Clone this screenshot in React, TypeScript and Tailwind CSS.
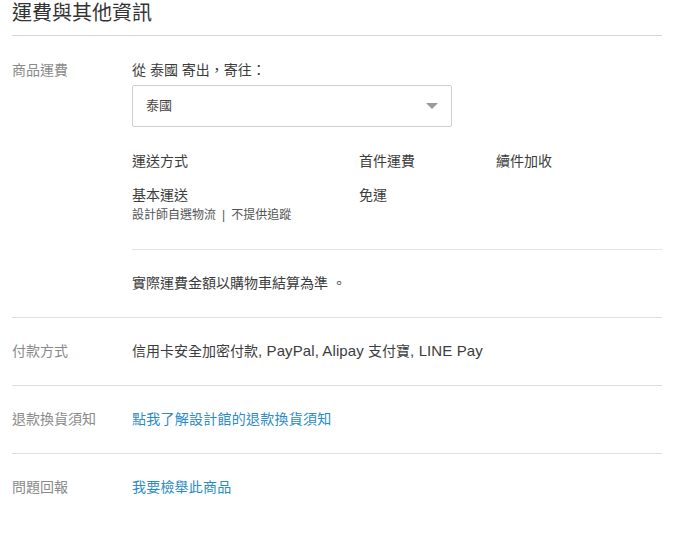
import React from 'react';

const Row = ({ label, children, last = false }: { label: string; children: React.ReactNode; last?: boolean }) => (
  <div className={`flex pt-[24px] pb-[25px] ${last ? '' : 'border-b border-[#dddddd]'}`}>
    <div className="w-[120px] shrink-0 text-[14px] leading-[18px] text-[#8a8a8a]">{label}</div>
    <div className="flex-1 text-[14px] leading-[18px] text-[#3c3c3c]">{children}</div>
  </div>
);

// Latin runs render a touch wider than the CJK text around them
const Lat = ({ children }: { children: React.ReactNode }) => <span className="text-[15px] tracking-[0.1px]">{children}</span>;

const ShippingInfo = () => {
  return (
    <div
      className="min-h-[538px] bg-white px-[12px] pr-[13px]"
      style={{ fontFamily: '"Liberation Sans", "Noto Sans CJK TC", sans-serif' }}
    >
      <h2 className="border-b border-[#d6d6d6] pb-[9px] text-[20px] leading-[26px] text-[#333333]">運費與其他資訊</h2>

      {/* 商品運費 */}
      <div className="flex border-b border-[#dddddd] pt-[25px] pb-[25px]">
        <div className="w-[120px] shrink-0 text-[14px] leading-[18px] text-[#8a8a8a]">商品運費</div>
        <div className="flex-1 text-[14px] leading-[18px] text-[#3c3c3c]">
          <p>從 泰國 寄出，寄往：</p>

          <div className="mt-[6px] flex h-[42px] w-[320px] items-center justify-between rounded-[2px] border border-[#cfcfcf] pl-[13px] pr-[13px]">
            <span className="text-[13px] text-[#444444]">泰國</span>
            <svg width="12" height="6" viewBox="0 0 12 6">
              <polygon points="0,0 12,0 6,6" fill="#9a9a9a" />
            </svg>
          </div>

          <div className="mt-[25px] flex">
            <div className="w-[227px]">運送方式</div>
            <div className="w-[137px]">首件運費</div>
            <div>續件加收</div>
          </div>

          <div className="mt-[16px] flex border-b border-[#e3e3e3] pb-[26px]">
            <div className="w-[227px]">
              <div>基本運送</div>
              <div className="mt-[3px] text-[12px] leading-[16px] text-[#555555]">
                設計師自選物流<span className="mx-[6px]">|</span>不提供追蹤
              </div>
            </div>
            <div className="w-[137px]">免運</div>
            <div></div>
          </div>

          <p className="mt-[24px]">實際運費金額以購物車結算為準 。</p>
        </div>
      </div>

      <Row label="付款方式">
        信用卡安全加密付款<Lat>, PayPal, Alipay </Lat>支付寶<Lat>, LINE Pay</Lat>
      </Row>

      <Row label="退款換貨須知">
        <a href="#" className="tracking-[0.25px] text-[#2b8bc6]">點我了解設計館的退款換貨須知</a>
      </Row>

      <Row label="問題回報" last>
        <a href="#" className="tracking-[0.2px] text-[#2b8bc6]">我要檢舉此商品</a>
      </Row>
    </div>
  );
};

export default ShippingInfo;
